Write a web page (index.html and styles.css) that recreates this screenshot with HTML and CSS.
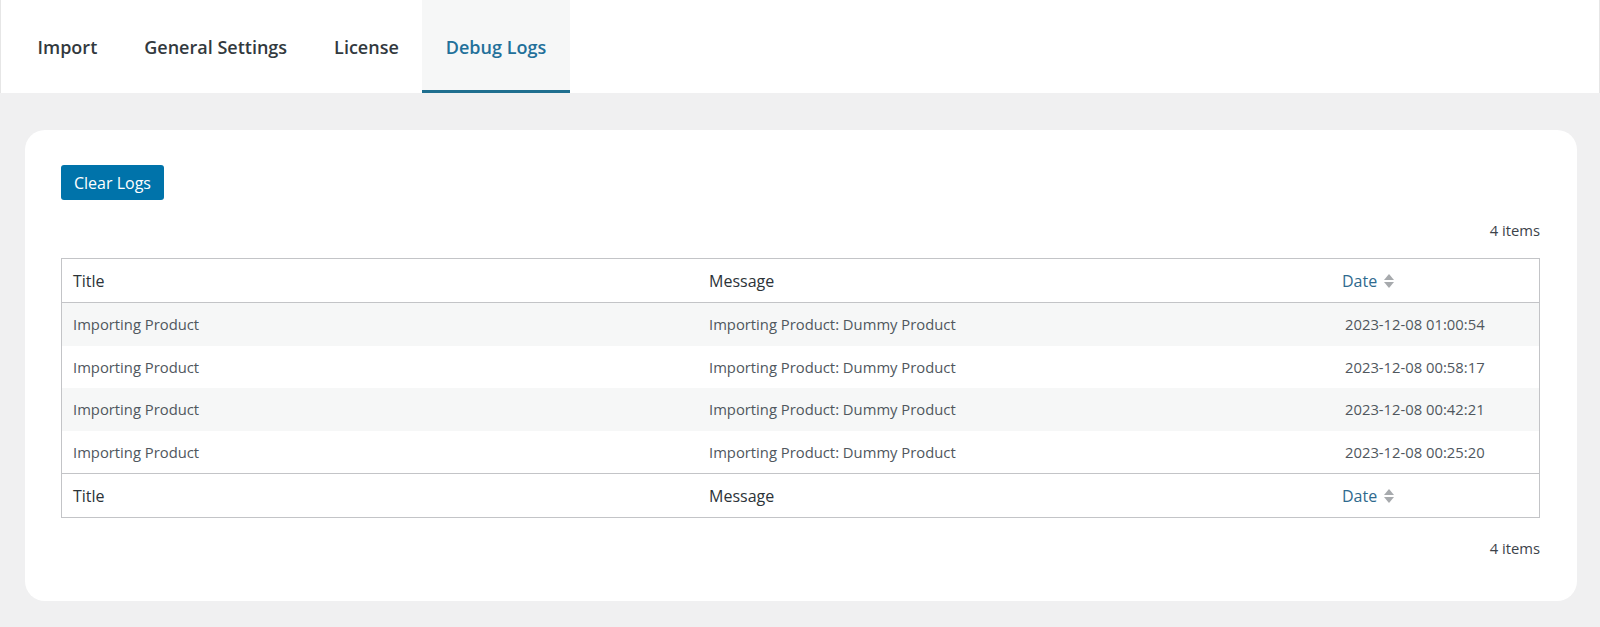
FILE: index.html
```html
<!DOCTYPE html>
<html lang="en">
<head>
  <meta charset="UTF-8">
  <meta name="viewport" content="width=device-width, initial-scale=1.0">
  <title>Debug Logs</title>
  <link rel="stylesheet" href="styles.css">
</head>
<body>
  <nav class="tabs">
    <a class="tab" href="#">Import</a>
    <a class="tab" href="#">General Settings</a>
    <a class="tab" href="#">License</a>
    <a class="tab active" href="#">Debug Logs</a>
  </nav>

  <div class="wrap">
    <div class="card">
      <button class="btn">Clear Logs</button>

      <div class="count top">4 items</div>

      <table class="logs">
        <thead>
          <tr>
            <th class="col-title">Title</th>
            <th class="col-message">Message</th>
            <th class="col-date"><a href="#">Date <span class="sort"></span></a></th>
          </tr>
        </thead>
        <tbody>
          <tr>
            <td>Importing Product</td>
            <td>Importing Product: Dummy Product</td>
            <td class="date">2023-12-08 01:00:54</td>
          </tr>
          <tr>
            <td>Importing Product</td>
            <td>Importing Product: Dummy Product</td>
            <td class="date">2023-12-08 00:58:17</td>
          </tr>
          <tr>
            <td>Importing Product</td>
            <td>Importing Product: Dummy Product</td>
            <td class="date">2023-12-08 00:42:21</td>
          </tr>
          <tr>
            <td>Importing Product</td>
            <td>Importing Product: Dummy Product</td>
            <td class="date">2023-12-08 00:25:20</td>
          </tr>
        </tbody>
        <tfoot>
          <tr>
            <th class="col-title">Title</th>
            <th class="col-message">Message</th>
            <th class="col-date"><a href="#">Date <span class="sort"></span></a></th>
          </tr>
        </tfoot>
      </table>

      <div class="count bottom">4 items</div>
    </div>
  </div>
</body>
</html>
```

FILE: styles.css
```css
body {
  margin: 0;
  background: #f0f0f1;
  font-family: 'Open Sans', sans-serif;
  color: #3c434a;
}

.tabs {
  display: flex;
  height: 93px;
  padding-left: 13px;
  background: #ffffff;
  border-left: 1px solid #e6e6e6;
  border-right: 1px solid #e6e6e6;
  box-sizing: border-box;
}

.tab {
  display: flex;
  align-items: center;
  padding: 3px 23.5px 0;
  font-size: 18px;
  font-weight: 600;
  color: #32393e;
  text-decoration: none;
  border-bottom: 3px solid transparent;
}

.tab.active {
  color: #22709a;
  background: #f6f7f7;
  border-bottom-color: #1f6f8f;
}

.wrap {
  padding: 37px 23px 27px 25px;
}

.card {
  background: #ffffff;
  border-radius: 20px;
  padding: 35px 37px 43px 36px;
}

.btn {
  display: block;
  height: 35px;
  padding: 0 13px;
  background: #0073aa;
  color: #ffffff;
  border: none;
  border-radius: 3px;
  font-family: inherit;
  font-size: 16px;
  cursor: pointer;
}

.count {
  text-align: right;
  font-size: 14.8px;
  color: #3c434a;
}

.count.top {
  margin: 20px 0 18px;
}

.count.bottom {
  margin-top: 20px;
}

.logs {
  width: 100%;
  border-collapse: collapse;
  border: 1px solid #c3c4c7;
  table-layout: fixed;
}

.logs th {
  height: 43px;
  padding: 0 11px;
  text-align: left;
  font-weight: 400;
  font-size: 16px;
  color: #2c3338;
}

.logs thead tr {
  border-bottom: 1px solid #c3c4c7;
}

.logs tfoot tr {
  border-top: 1px solid #c3c4c7;
}

.col-title {
  width: 614px;
}

.col-date {
  width: 186px;
}

.logs th a {
  color: #2f6a8e;
  text-decoration: none;
}

.sort {
  display: inline-block;
  width: 10px;
  height: 16px;
  margin-left: 3px;
  vertical-align: -2px;
  position: relative;
}

.sort::before,
.sort::after {
  content: "";
  position: absolute;
  left: 0;
  border-left: 5px solid transparent;
  border-right: 5px solid transparent;
}

.sort::before {
  top: 1px;
  border-bottom: 6px solid #a7aaad;
}

.sort::after {
  top: 9px;
  border-top: 6px solid #a7aaad;
}

.logs td {
  height: 42.6px;
  padding: 0 11px;
  font-size: 14.8px;
  color: #50575e;
}

.logs td.date {
  padding-left: 14px;
}

.logs tbody tr:nth-child(odd) {
  background: #f6f7f7;
}
```
